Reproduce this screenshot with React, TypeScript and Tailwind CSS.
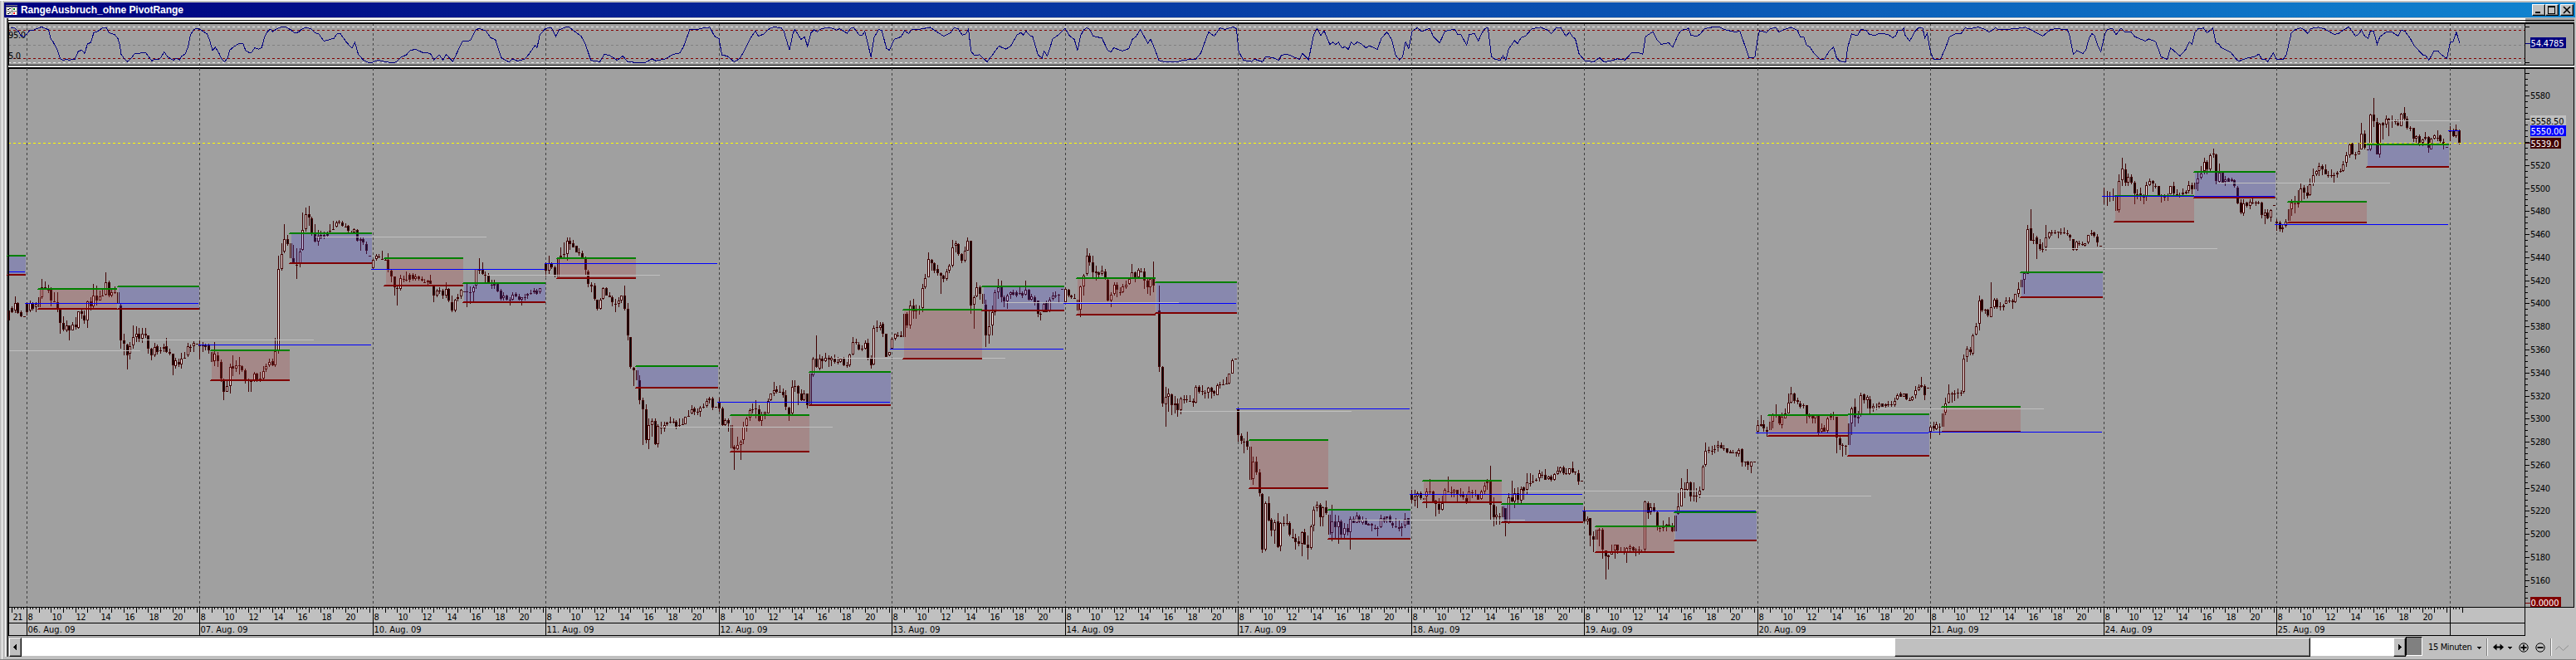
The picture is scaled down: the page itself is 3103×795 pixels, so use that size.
import React from "react";

// Chart data is stored in thirds of a pixel. Bars: w = rising, k = falling (high, body top,
// body bottom, low), d = doji (high, close, low), g = opening bar of a range (top, bottom), - = gap.
type Session = { x: number; y: number; bars: string };

const PITCH = 10.97;

const SESSIONS: Session[] = [
  { x: 32, y: 0, bars: "k1118 1122 1158 1160,k1108 1114 1128 1132,w1072 1096 1122 1132,k1094 1096 1132 1136,k1122 1130 1144 1146,d1143 1143 1144" },
  { x: 97, y: 0, bars: "k1094 1098 1130 1140,w1088 1097 1124 1130,k1094 1098 1118 1122,w1094 1100 1112 1130,g1074 1110,w1008 1040 1074 1080,d1018 1040 1048,d1030 1048 1060,k1040 1048 1088 1108,d1056 1090 1094,k1056 1092 1120 1130,k1118 1120 1168 1206,k1144 1168 1192 1198,w1160 1178 1196 1200,k1176 1178 1196 1232,w1165 1174 1194 1196,k1146 1174 1184 1192,w1126 1126 1186 1188,k1120 1126 1136 1152,k1124 1140 1160 1172,w1088 1090 1160 1186,k1074 1090 1108 1124,w1028 1068 1108 1120,k1034 1068 1088 1104,w1050 1072 1088 1088,d1046 1068 1070,w984 1020 1066 1068,k1016 1022 1068 1074,w1046 1056 1068 1074,d1035 1056 1064,g1056 1100,k1098 1104 1230 1260,k1206 1230 1242 1284,k1244 1246 1284 1337,w1238 1252 1280 1300,w1178 1218 1250 1260,w1180 1206 1220 1236,k1186 1206 1226 1236,w1186 1206 1226 1240,k1186 1208 1212 1222,k1212 1214 1260 1280,k1258 1262 1286 1302,w1240 1254 1286 1290,k1246 1252 1272 1282,d1254 1267 1280,w1242 1255 1262 1274,k1222 1252 1272 1276,k1260 1274 1280 1286,k1278 1280 1322 1358,w1294 1303 1324 1332,k1298 1308 1319 1326,w1276 1297 1319 1334,d1272 1294 1298,w1240 1252 1286 1290,d1246 1254 1272,w1234 1240 1252 1272,d1242 1243 1244" },
  { x: 721, y: 0, bars: "d1230 1248 1300,d1238 1249 1274,k1242 1246 1254 1268,k1244 1248 1268 1280,g1272 1308,w1236 1280 1306 1325,k1274 1284 1306 1328,k1300 1308 1368 1380,k1368 1372 1418 1448,w1374 1396 1418 1418,w1315 1328 1396 1422,k1284 1325 1334 1360,w1304 1320 1334 1346,d1292 1320 1354,k1322 1324 1338 1346,k1334 1340 1372 1386,d1370 1376 1418,d1378 1378 1416,w1346 1350 1378 1380,k1348 1350 1374 1382,k1346 1368 1376 1380,w1324 1342 1368 1372,w1316 1324 1336 1346,w1298 1310 1322 1326,k1298 1306 1320 1324,w1222 1270 1320 1326,w924 972 1266 1280,w880 918 974 980,w810 866 910 916,k850 866 882 888,g880 935,k886 933 950 956,d898 957 1008,w898 910 956 966,w770 832 904 908,w752 774 830 838,k746 774 788 818,k784 790 848 854,k810 848 875 876,w832 852 875 888,k836 850 862 864,k838 850 860 864,k838 844 852 860,d812 836 840,d798 828 832,w798 804 820 824,d795 803 812,k798 804 818 820,d808 820 824,k814 818 836 840,d834 840 846,w826 828 842 846,k828 832 870 874,w858 866 872 906,k860 866 878 886,k874 882 906 918,d924 924 926" },
  { x: 1348, y: 0, bars: "w936 940 970 976,w918 924 938 944,d918 928 934,d906 936 940,d938 939 942,k915 940 976 986,k974 978 1000 1022,k1000 1000 1040 1068,d1030 1042 1106,w994 1006 1046 1050,d998 1010 1020,d982 1012 1018,k988 994 1012 1020,k988 994 1010 1016,w990 1000 1008 1014,k998 1000 1010 1016,k1000 1010 1016 1018,d1008 1020 1024,k1012 1014 1020 1036,k994 1014 1026 1028,k1030 1034 1068 1094,w1044 1050 1068 1074,d1038 1050 1064,k1044 1050 1068 1082,w1020 1044 1068 1078,k1042 1044 1088 1092,k1070 1092 1122 1128,w1082 1084 1122 1130,w1062 1074 1082 1090,w1046 1048 1072 1080,d1053 1054 1056,d1028 1054 1110,d1036 1058 1100,w1032 1038 1058 1090,w974 974 1034 1044,d934 976 992,k950 976 990 994,d982 994 1020,k988 996 1020 1026,d1012 1030 1046,w1012 1026 1032 1044,k1026 1028 1054 1056,k1044 1050 1080 1086,w1056 1068 1078 1086,k1066 1068 1084 1086,d1074 1084 1104,w1056 1066 1084 1086,k1056 1062 1072 1076,k1062 1072 1084 1086,w1074 1076 1084 1106,d1062 1076 1086,w1060 1062 1070 1082,d1048 1060 1066,k1042 1050 1056 1062,k1044 1052 1062 1066,w1042 1042 1058 1064" },
  { x: 1972, y: 600, bars: "k350 353 380 400,w324 353 380 392,k348 353 366 374,k362 366 396 404,g333 400,w294 324 330 332,d276 318 338,w258 270 318 344,k258 270 282 305,k268 280 294 296,k288 290 312 314,d298 312 324,k306 316 330 332,k328 330 376 396,k376 382 428 440,k420 430 434 456,k424 432 482 488,k484 484 516 524,w478 484 516 520,w438 442 482 484,k440 442 468 468,k456 468 472 474,k470 474 494 508,d482 498 530,w476 486 500 512,w468 470 486 496,k432 468 518 524,k496 516 614 632,k618 620 726 734,k728 730 740 796,g740 774,k756 774 846 862,k838 848 880 1010,k862 880 990 1004,w912 936 990 1024,w912 922 936 980,k912 922 1006 1010,w934 940 1006 1018,k924 944 950 970,w924 936 950 960,w924 928 934 940,d906 924 930,d912 924 930,k918 924 942 952,d914 936 942,d914 934 936,w906 906 934 934,d884 904 906,w864 880 896 898,k870 876 888 902,d876 890 900,w868 874 890 906,d858 872 876,w842 850 868 874,w836 840 846 858,k834 840 874 884,d870 871 873" },
  { x: 2599, y: 600, bars: "k838 852 878 888,k870 876 938 940,w912 918 938 940,k914 920 930 962,g936 1020,k1010 1014 1024 1100,w980 1010 1024 1026,w990 998 1010 1062,w924 944 992 1006,w908 912 940 960,w876 882 910 922,d858 880 896,d846 878 912,k866 880 922 924,w888 898 922 940,w888 890 898 916,w840 850 894 896,w822 824 848 850,w780 810 824 832,k796 808 816 822,d792 816 818,k804 816 828 838,k812 828 872 884,k870 874 898 922,w774 798 896 898,d774 796 816,k792 796 822 864,k808 822 848 850,w810 824 848 850,k822 824 864 876,g750 862,w690 698 756 762,k612 698 728 730,w681 696 732 738,k687 696 706 732,w675 694 706 708,k684 694 700 728,w687 694 702 724,k681 696 710 714,d690 709 718,w696 698 708 712,k692 698 720 724,d708 720 730,w678 682 720 726,w620 636 682 686,d624 636 646,k638 645 665 667,d648 660 670,w632 640 660 664,k626 640 696 704,k684 698 720 734,w578 586 718 720,d558 584 602,w564 576 586 596,k564 570 606 620,k606 606 690 692,w672 674 686 688" },
  { x: 3223, y: 600, bars: "w620 624 660 662,w606 608 626 632,d602 612 620,k597 612 618 620,g534 620,k530 534 576 586,w488 504 576 590,k480 504 526 554,w502 520 526 554,d504 518 538,w428 442 514 530,w392 406 440 446,w314 336 402 404,k338 340 352 378,k348 352 378 388,k358 374 388 398,k386 388 398 462,k394 398 410 422,w372 382 410 414,w356 362 378 388,w267 294 360 366,w270 280 290 312,k280 282 318 324,k316 320 344 352,w292 306 344 348,w258 270 306 306,k270 270 504 536,w470 474 502 590,w420 440 472 474,k434 440 462 484,g462 500,k484 502 612 656,w526 580 612 644,w506 530 578 612,w448 458 530 542,w408 438 456 482,k416 434 474 492,k468 474 490 510,w462 468 490 516,w454 458 466 482,k448 456 466 470,k450 456 470 474,d438 460 466,k454 460 470 478,w414 448 466 468,k446 448 484 486,w462 472 484 486,k470 476 492 506,k486 488 536 548,d530 534 560,w494 498 528 530,k488 494 528 530,w474 484 526 530,w458 468 482 488,d454 468 478,d464 466 492,d444 445 446" },
  { x: 3850, y: 600, bars: "w440 446 492 494,k446 448 468 474,k466 468 476 482,d464 477 482,g484 522,w432 436 520 548,w390 396 436 468,w297 324 392 396,k315 324 350 360,k324 350 386 402,k360 382 388 414,k382 386 394 402,w360 380 390 398,k372 382 410 412,k408 412 486 490,w456 466 488 512,w420 430 464 468,k422 430 448 474,d438 456 468,w426 436 456 460,w414 430 438 446,w402 410 426 430,w354 386 408 410,k382 386 404 420,w370 376 402 404,d370 382 386,k370 382 414 446,k408 416 438 462,w402 410 440 468,k345 406 434 456,-,k432 522 726 746,k724 726 860 870,w798 836 862 944,w804 822 836 890,k824 826 864 900,w832 858 866 896,k842 860 884 906,w836 840 884 898,d830 844 860,d830 844 856,d828 849 854,k842 850 854 870,w792 800 856 858,k794 798 816 822,d792 814 828,d810 820 840,w800 802 820 840,k798 802 816 840,k810 814 824 832,w788 792 828 830,d780 790 806,d771 790 794,d762 786 790,w750 752 788 790,w696 702 750 752,d696 697 699" },
  { x: 4474, y: 900, bars: "k576 580 674 698,k666 676 694 705,d684 696 740,k660 694 716 728,g714 834,w752 768 832 854,k750 768 808 816,k796 808 884 896,k884 886 1088 1100,w914 920 1086 1092,k896 920 982 984,k972 980 1018 1038,w978 988 1018 1066,k954 984 1078 1082,w988 992 1076 1092,d966 990 1004,d957 990 1000,k984 992 1034 1040,d1012 1042 1048,k1030 1044 1060 1086,k1038 1056 1066 1076,w1022 1024 1066 1112,k1012 1024 1068 1070,k1036 1068 1082 1124,w998 1002 1082 1086,w932 942 1000 1020,w912 924 938 950,k918 924 970 1004,w930 934 970 1004,k909 934 956 960,g960 1032,w924 986 1028 1056,k960 986 1006 1052,w964 984 1006 1066,k978 984 1034 1052,w990 1010 1034 1052,k994 1010 1024 1036,w966 976 1024 1086,k966 976 990 992,w951 964 990 992,k960 966 984 990,w966 980 990 998,k972 980 998 998,k992 994 998 1000,k990 994 1000 1022,d996 1010 1016,d1004 1010 1038,w960 974 1006 1008,k966 974 984 990,w966 968 974 990,k960 966 988 990,k984 990 1000 1010,d972 1004 1010,k982 1006 1010 1020,w990 1002 1010 1038,w954 976 1000 1010,k972 974 998 998" },
  { x: 5101, y: 900, bars: "k870 888 908 918,w870 896 910 932,w876 884 894 936,k876 884 902 908,g900 908,w864 878 896 938,d831 876 890,k874 876 912 918,k906 910 922 966,k900 922 942 958,w892 918 944 946,w864 870 916 918,d822 876 880,d858 880 898,w868 872 880 898,k870 872 890 920,d864 888 898,k876 888 898 906,k886 900 916 922,w858 876 916 920,d870 880 900,d870 886 896,k886 888 906 908,w870 876 904 906,w844 856 876 888,w832 840 848 870,k783 840 926 978,k898 924 970 1004,w932 960 970 996,d954 966 996,g932 970,k936 938 984 1038,w882 898 992 994,k837 898 914 916,w866 884 914 938,k861 882 908 920,w860 868 910 918,k858 862 874 908,w810 844 872 888,d812 846 858,d816 840 846,d828 834 842,w800 812 830 840,d804 818 828,k795 816 834 836,w820 824 832 836,k816 824 836 842,w810 814 836 838,w788 802 814 816,w788 790 804 812,k783 790 810 816,d794 812 816,w792 794 814 816,k770 792 808 810,d804 806 818,k800 810 842 854,d837 838 840" },
  { x: 5725, y: 900, bars: "k930 946 984 990,w968 976 984 998,k972 974 1036 1074,k1020 1038 1052 1096,g1016 1052,d1010 1016 1074,k1010 1014 1086 1120,k1090 1090 1112 1196,w1104 1108 1114 1158,w1068 1092 1104 1106,w1068 1070 1090 1120,k1068 1070 1090 1102,d1078 1094 1100,d1078 1096 1106,w1078 1082 1096 1136,w1070 1074 1084 1096,k1074 1078 1090 1096,d1080 1088 1112,d1074 1088 1104,d1088 1092 1096,w910 914 1088 1096,k912 918 954 976,w918 934 952 960,k918 934 950 952,k946 952 1000 1018,d1000 1010 1024,w982 1002 1010 1022,d994 998 1020,d970 996 1006,k992 1002 1022 1024,g964 1020,w882 930 958 960,w828 864 930 930,d843 868 900,w795 844 872 874,k840 844 894 914,d843 892 912,d866 892 916,w858 874 890 900,w780 786 870 874,w699 730 782 788,d714 728 740,d711 730 744,d708 724 740,w693 708 718 732,k699 708 720 722,d708 722 730,k720 722 736 740,k728 732 738 740,d726 736 740,d732 736 752,w720 726 742 752,k722 724 772 788,d768 770 788,k766 770 780 800,w768 770 786 810,d768 769 771" },
  { x: 6352, y: 1200, bars: "w318 338 362 364,w300 334 340 342,k318 334 350 360,k344 354 360 380,g324 354,w294 300 324 348,d261 300 310,k300 302 332 338,w292 308 338 348,w276 296 312 314,w222 256 294 296,w198 222 256 258,k220 222 250 258,k237 248 254 262,k249 258 270 276,d258 264 276,k264 266 304 332,d294 304 314,k300 304 314 332,w300 302 314 332,k300 302 364 380,w332 348 362 364,k336 346 360 362,w308 312 358 366,w294 304 310 320,d288 302 318,k306 306 382 438,k378 386 408 428,d402 410 452,d408 412 444,g332 410,w272 276 332 372,k240 270 310 342,k286 308 312 332,w219 228 302 306,k222 226 248 258,w228 236 246 276,k231 244 276 294,w258 268 276 290,d258 276 284,w252 258 272 276,k258 260 270 272,k258 262 268 274,d249 262 270,d249 262 270,w237 250 266 270,w222 228 244 248,k216 222 234 236,w222 224 234 236,k222 224 244 246,d237 246 250,w231 236 248 250,w195 212 230 242,w189 198 212 214,w162 192 200 202,k190 196 230 248,d201 202 204" },
  { x: 6976, y: 300, bars: "w1236 1242 1262 1286,k1224 1240 1250 1258,w1224 1234 1252 1256,d1230 1242 1272,g1194 1244,w1137 1158 1192 1202,w1089 1122 1156 1158,d1116 1124 1156,d1110 1124 1150,d1104 1120 1142,d1110 1120 1132,w981 996 1118 1122,w951 960 992 1010,k954 964 974 984,w906 912 980 984,w867 880 910 914,w768 786 872 896,k782 784 822 828,d816 820 836,k818 820 842 848,w720 810 846 848,w778 784 810 818,k778 784 810 818,d794 808 822,k800 804 808 824,w774 786 800 800,d774 786 796,k782 786 794 818,w762 764 794 796,w720 744 762 776,g711 740,w684 688 712 762,w513 528 692 692,k456 526 570 572,d543 568 582,k552 558 584 636,k566 584 600 606,d578 600 614,w513 560 596 606,w537 542 560 564,d531 540 554,d531 540 548,d538 538 562,d525 540 550,d522 540 548,d531 544 554,k548 550 560 570,k564 566 604 606,w570 574 604 606,d570 580 590,d573 582 588,w579 580 588 592,w549 550 576 584,d531 544 552,k537 542 554 558,k548 556 576 592,d588 589 591" },
  { x: 7603, y: 300, bars: "d378 410 440,d390 410 446,d393 410 430,d381 410 428,g412 462,w330 354 460 470,w270 310 352 372,k291 312 360 372,w327 340 360 374,k330 340 360 368,k354 360 400 440,d384 402 420,k378 400 408 428,k402 408 416 440,w357 370 408 428,w345 354 370 372,k351 354 364 394,d363 374 382,k372 374 406 412,d402 408 434,d404 412 428,d400 410 428,w372 374 404 404,k357 374 400 410,d384 402 406,d396 406 414,k381 398 404 412,w388 394 398 402,w354 370 390 400,k360 370 386 402,g362 386,w321 346 364 390,w300 328 344 350,w270 286 320 330,k279 286 314 330,w255 262 314 320,d237 256 272,k255 258 356 366,w291 324 358 364,k320 324 360 362,w337 348 358 374,k342 346 358 358,w342 348 356 358,k350 352 374 380,k372 378 436 440,k420 434 470 474,w422 436 472 480,k430 434 444 452,w420 430 444 458,d414 434 440,d428 434 444,d426 434 440,k430 434 478 490,w456 468 480 512,k456 468 490 492,w456 460 488 502,d441 442 444" },
  { x: 8227, y: 0, bars: "w792 802 808 836,k800 804 830 838,w812 822 830 842,w792 802 818 824,g756 800,w720 732 756 782,d708 736 772,k687 732 738 750,w663 682 732 734,k669 680 698 720,k674 698 710 718,w645 666 706 708,w609 634 664 674,w617 620 632 638,w588 602 618 638,k596 600 614 634,k596 614 632 632,d618 634 642,d612 634 642,d624 634 660,w618 626 632 644,d609 620 624,w582 594 618 622,w549 562 590 604,w518 522 562 570,k516 520 558 560,d549 560 578,w516 546 558 560,w444 484 540 542,k472 484 536 542,d540 541 542,w412 416 540 546,k354 414 440 460,k426 442 558 560,w444 448 560 570,k442 446 454 504,w418 430 452 462,k426 430 434 494,d418 436 462,d432 440 452,k434 444 454 458,w408 412 456 458,k387 410 430 436,k420 430 464 468,d458 464 474,k462 464 502 514,w490 494 502 516,k486 494 522 530,w502 504 516 530,w478 496 502 508,k492 496 536 552,w498 502 540 542,w486 490 502 506,d472 498 510,k486 490 510 518,k502 514 518 540,d531 532 534" },
  { x: 8854, y: 0, bars: "d456 474 510,k466 472 494 496,w450 470 494 498,k468 472 518 524" },
];

const DAYS: [number, string][] = [
  [97, "06. Aug. 09"], [721, "07. Aug. 09"], [1348, "10. Aug. 09"], [1972, "11. Aug. 09"], [2599, "12. Aug. 09"],
  [3223, "13. Aug. 09"], [3850, "14. Aug. 09"], [4474, "17. Aug. 09"], [5101, "18. Aug. 09"], [5725, "19. Aug. 09"],
  [6352, "20. Aug. 09"], [6976, "21. Aug. 09"], [7603, "24. Aug. 09"], [8227, "25. Aug. 09"], [8854, ""],
];

// morning / afternoon ranges: kind, left, right, upper line, lower line
const RANGES: ["r" | "b", number, number, number, number][] = [
  ["b", 26, 93, 921, 990], ["r", 136, 423, 1041, 1113], ["b", 424, 720, 1032, 1113], ["r", 760, 1047, 1263, 1371],
  ["b", 1046, 1344, 840, 948], ["r", 1388, 1674, 930, 1029], ["b", 1672, 1971, 1020, 1089], ["r", 2011, 2298, 930, 1002],
  ["b", 2296, 2595, 1320, 1398], ["r", 2638, 2925, 1497, 1629], ["b", 2923, 3219, 1341, 1461], ["r", 3262, 3549, 1116, 1293],
  ["b", 3548, 3846, 1032, 1119], ["r", 3889, 4176, 1002, 1134], ["b", 4174, 4470, 1017, 1128], ["r", 4513, 4800, 1587, 1761],
  ["b", 4798, 5097, 1839, 1944], ["r", 5140, 5427, 1734, 1812], ["b", 5425, 5721, 1818, 1884], ["r", 5764, 6051, 1899, 1992],
  ["b", 6049, 6348, 1848, 1950], ["r", 6388, 6678, 1497, 1572], ["b", 6676, 6972, 1494, 1644], ["r", 7015, 7302, 1467, 1557],
  ["b", 7300, 7599, 981, 1071], ["r", 7639, 7929, 705, 798], ["b", 7927, 8223, 618, 711], ["r", 8265, 8553, 726, 801],
  ["b", 8551, 8850, 519, 600],
];

const OPENS: [number, number, number][] = [
  [33, 90, 981], [90, 718, 1095], [718, 1341, 1245], [1341, 1969, 972], [1968, 2592, 951], [2592, 3216, 1452],
  [3216, 3843, 1260], [3843, 4467, 1095], [4467, 5094, 1476], [5094, 5718, 1785], [5718, 6345, 1845], [6345, 6969, 1563],
  [6969, 7596, 1560], [7596, 8220, 708], [8220, 8847, 810], [8847, 8889, 471],
];

const MIDS: [number, number, number][] = [
  [33, 507, 1266], [515, 1134, 1227], [1140, 1758, 855], [1758, 2385, 993], [2385, 3009, 1542], [3009, 3633, 1293],
  [3633, 4260, 1092], [4260, 4884, 1485], [4884, 5511, 1878], [5515, 6140, 1773], [6140, 6762, 1791], [6762, 7386, 1476],
  [7390, 8013, 897], [8013, 8637, 660], [8630, 8889, 435],
];

const OSC: { x: number; sx: number; y: number; pts: string }[] = [
  { x: 0, sx: 1 / 3, y: 0, pts: "38,100 52,100 58,107 66,112 75,128 85,132 97,122 107,108 115,110 125,106 140,100 150,97 158,100 175,107 183,140 192,152 207,180 217,212 228,217 240,214 250,217 262,213 270,213 283,184 295,181 305,192 316,158 328,153 338,118 350,114 370,100 384,100 393,118 413,124 425,138 432,160 437,195 450,214 460,222 475,208 487,192 500,193 512,190 526,190 548,220 557,213 568,215 578,211 593,187 605,205 625,217 638,210 648,216 655,203 668,195 678,172 688,125 700,106 712,102 725,107 748,122 757,145 767,181 778,170 790,190 800,212 811,223 822,208 830,180 842,170 862,157 878,158 887,182 900,190 908,190 920,172 935,177 945,172 955,135 965,115 977,104 985,114 998,104 1018,97 1034,98 1050,107 1066,119 1080,115 1090,105 1100,100 1122,102 1140,119 1150,120 1170,148 1206,138 1218,121 1230,122 1250,150 1271,174 1282,152 1294,195 1312,216 1330,225 1342,226 1365,217 1385,221 1410,226 1430,224 1448,206 1468,198 1480,183 1500,177 1520,186 1530,191" },
  { x: 515, sx: 730 / 1568, y: 20, pts: "0,130 8,135 16,155 30,138 40,157 48,136 65,162 90,88 110,86 125,46 134,43 150,50 163,76 175,82 190,148 210,164 220,152 233,160 252,152 262,135 278,103 283,112 290,65 305,42 320,40 331,71 340,47 358,37 366,38 385,58 397,70 408,98 422,157 445,163 457,136 470,139 490,157 505,142 517,162 540,166 563,166 580,152 590,159 615,152 635,136 652,131 662,108 678,46 700,45 715,40 730,38 742,70 754,80 761,138 775,142 793,163 808,150 820,120 835,77 848,52 856,70 870,62 885,42 897,37 915,41 921,50 936,120 945,60 950,46 966,82 975,73 983,107 992,58 1000,47 1008,55 1015,45 1035,39 1048,42 1058,48 1066,43 1085,60 1095,41 1103,41 1117,67 1125,66 1131,52 1147,145 1155,75 1167,46 1175,49 1187,115 1195,121 1207,82 1225,72 1234,50 1244,61 1252,47 1270,46 1300,38 1316,53 1335,70 1353,58 1362,40 1372,43 1383,66 1393,62 1399,45 1406,125 1415,140 1428,137 1447,163 1460,140 1478,106 1495,117 1508,107 1525,65 1535,57 1541,66 1548,52" },
  { x: 1240, sx: 730 / 1568, y: 20, pts: "0,67 8,72 22,138 32,150 38,124 46,142 60,80 76,64 92,42 103,68 116,82 124,122 132,68 140,47 148,40 155,45 165,70 187,77 202,120 210,128 218,112 240,124 257,115 266,82 275,72 287,46 306,97 313,80 322,110 335,158 350,163 382,164 395,157 430,153 443,132 463,55 478,70 493,40 505,46 527,37 535,43 541,125 553,157 575,162 582,153 603,163 610,145 628,147 645,157 652,138 668,136 698,154 706,133 722,155 735,65 744,43 753,68 762,51 777,100 785,92 792,100 799,92 809,113 816,108 825,118 832,92 840,101 848,91 858,98 871,113 878,104 900,118 910,78 925,55 937,83 947,138 957,156 965,145 973,90 981,116 990,52 1003,40 1015,53 1035,42 1045,72 1061,94 1075,52 1100,45 1108,64 1116,64 1131,103 1138,64 1152,61 1161,88 1170,60 1178,43 1186,40 1195,143 1205,154 1218,157 1225,140 1232,157 1240,115 1255,86 1263,97 1272,75 1283,70 1300,43 1322,38 1340,48 1350,61 1362,41 1374,40 1388,70 1397,55 1405,72 1412,80 1422,135 1437,159 1460,163 1475,147 1485,162 1500,161 1520,152 1540,156 1552,139" },
  { x: 1965, sx: 740 / 1568, y: 20, pts: "0,131 20,131 29,135 36,72 48,60 55,55 66,84 76,100 95,94 105,110 120,63 128,48 140,46 145,40 152,66 167,71 175,63 187,43 210,37 225,38 240,47 265,55 277,52 289,102 300,148 315,146 322,80 327,50 345,57 355,42 370,40 376,55 388,47 408,38 424,50 431,72 440,74 447,103 456,110 466,132 480,152 492,155 505,123 516,110 524,150 533,161 547,163 552,110 562,62 577,68 586,45 600,50 607,64 622,67 632,61 655,63 666,76 674,70 680,50 690,48 695,42 698,65 710,88 725,50 733,40 743,40 749,77 755,60 763,125 770,152 788,155 800,118 812,72 828,61 842,60 852,40 862,44 885,37 900,44 913,55 930,40 935,46 975,44 1005,38 1020,47 1050,70 1070,46 1085,43 1113,47 1119,72 1128,136 1137,122 1152,133 1160,120 1168,78 1175,61 1182,68 1190,103 1198,127 1208,65 1214,46 1228,43 1237,65 1250,41 1260,55 1275,55 1285,72 1312,88 1320,80 1338,90 1352,145 1368,154 1376,112 1400,142 1415,118 1424,90 1431,100 1438,58 1447,43 1460,41 1469,58 1484,41 1492,95 1500,99 1505,111 1530,129 1543,152 1550,161" },
  { x: 2700, sx: 1 / 3, y: 0, pts: "0,216 15,211 50,203 62,194 73,213 85,213 94,222 115,191 127,214 150,215 162,196 180,118 195,106 213,100 228,109 239,121 250,103 277,98 300,104 335,124 350,121 367,108 388,97 397,109 412,130 425,121 433,107 445,130 457,138 465,113 477,113 490,159 500,132 523,115 545,116 565,130 577,109 590,112 610,139 622,162 655,198 664,199 677,216 695,184 710,184 720,196 742,211 754,150 764,151 776,116 788,155" },
];

const oscPoints = OSC.flatMap((s) =>
  s.pts.split(" ").map((p) => {
    const [x, y] = p.split(",").map(Number);
    return `${(s.x + x * s.sx + 0.2).toFixed(1)},${(s.y + y / 3 + 0.2).toFixed(1)}`;
  }),
).join(" ");

const px = (u: number) => Math.floor(u / 3);
const TEXT = "font-['DejaVu_Sans_Condensed','DejaVu_Sans',sans-serif] text-[11px]";

function Candle({ x, y, bar }: { x: number; y: number; bar: string }) {
  const kind = bar[0];
  if (kind === "-") return null;
  const v = bar.slice(1).split(" ").map((n) => Math.round((Number(n) + y - 1) / 3));
  if (kind === "g") {
    return (
      <>
        <rect x={x - 1} y={v[0]} width={1} height={v[1] - v[0]} fill="#400000" />
        <rect x={x + 1} y={v[0]} width={1} height={v[1] - v[0]} fill="#400000" />
      </>
    );
  }
  if (kind === "d") {
    return (
      <>
        <rect x={x} y={v[0]} width={1} height={Math.max(1, v[2] - v[0])} fill="#400000" />
        <rect x={x - 1} y={v[1]} width={3} height={1} fill="#400000" />
      </>
    );
  }
  const h = Math.max(2, v[2] - v[1]);
  return (
    <>
      <rect x={x} y={v[0]} width={1} height={Math.max(1, v[3] - v[0])} fill="#400000" />
      <rect x={x - 1} y={v[1]} width={3} height={h} fill="#400000" />
      {h > 2 && <rect x={x} y={v[1] + 1} width={1} height={h - 2} fill={kind === "w" ? "#ffffff" : "#000000"} />}
    </>
  );
}

function DayLines({ y1, y2 }: { y1: number; y2: number }) {
  return (
    <>
      {DAYS.map(([u]) => (
        <line key={u} x1={px(u) + 0.5} x2={px(u) + 0.5} y1={y1} y2={y2} stroke="#404040" strokeDasharray="3 3" />
      ))}
    </>
  );
}

function Oscillator() {
  const levels: [number, string][] = [[32, "#e8e8e8"], [36, "#800000"], [54, "#808080"], [70, "#800000"], [75, "#e8e8e8"]];
  return (
    <svg className="block" width={3091} height={50} viewBox="10 29 3091 50" shapeRendering="crispEdges">
      <rect x={10} y={29} width={3091} height={50} fill="#a0a0a0" />
      <DayLines y1={28} y2={78} />
      {levels.map(([y, c]) => (
        <line key={y} x1={10} x2={3041} y1={y + 0.5} y2={y + 0.5} stroke={c} strokeDasharray="3 3" />
      ))}
      <text x={10} y={46} fill="#000" className={TEXT} textLength={21}>95.0</text>
      <text x={10} y={71} fill="#000" className={TEXT} textLength={15}>5.0</text>
      <polyline points={oscPoints} fill="none" stroke="#000080" strokeWidth={1} />
      <path d="M10.5 29V78.5H3100.5V29M3041.5 29V78M3042 32.5h5M3042 75.5h5" fill="none" stroke="#000" />
      <rect x={3042} y={52} width={6} height={1} fill="#000080" />
      <rect x={3048} y={45} width={43} height={13} fill="#000080" />
      <text x={3048.5} y={56} fill="#fff" className={TEXT} textLength={40}>54.4785</text>
    </svg>
  );
}

const priceY = (p: number) => Math.floor(199.3 + (5520 - p) * 1.3889);
const PRICES = Array.from({ length: 92 }, (_, i) => 5600 - i * 5);

function PriceTag({ y, w, h = 13, bg, fg, label }: { y: number; w: number; h?: number; bg: string; fg: string; label: string }) {
  return (
    <>
      <rect x={3048} y={y} width={w} height={h} fill={bg} />
      <text x={3048.5} y={y + 11} fill={fg} className={TEXT} textLength={w - 3}>{label}</text>
    </>
  );
}

function PriceChart() {
  return (
    <svg className="block overflow-visible" width={3091} height={648} viewBox="10 83 3091 648" shapeRendering="crispEdges">
      <rect x={10} y={83} width={3091} height={648} fill="#a0a0a0" />
      <DayLines y1={82} y2={731} />
      {SESSIONS.map((s) =>
        s.bars.split(",").map((b, i) => <Candle key={`${s.x}-${i}`} x={px(s.x + i * PITCH + 0.5)} y={s.y} bar={b} />),
      )}
      {RANGES.map(([k, a, b, g, r]) => (
        <rect
          key={a}
          x={px(a + 7)}
          y={px(g) + 1}
          width={px(b) - px(a + 7)}
          height={px(r) - px(g) - 1}
          fill={k === "r" ? "rgba(176,64,64,0.25)" : "rgba(64,64,216,0.25)"}
        />
      ))}
      {MIDS.map(([a, b, y]) => (
        <rect key={a} x={px(a)} y={px(y)} width={px(b) - px(a)} height={1} fill="#c0c0c0" />
      ))}
      {RANGES.map(([, a, b, g, r]) => (
        <g key={a}>
          <rect x={px(a)} y={px(g) + 1} width={1} height={1} fill="#008000" />
          <rect x={px(a) + 1} y={px(g)} width={px(b) - px(a) - 1} height={2} fill="#008000" />
          <rect x={px(a)} y={px(r) + 1} width={1} height={1} fill="#800000" />
          <rect x={px(a) + 1} y={px(r)} width={px(b) - px(a) - 1} height={2} fill="#800000" />
        </g>
      ))}
      {OPENS.map(([a, b, y]) => (
        <rect key={a} x={px(a)} y={px(y)} width={px(b) - px(a)} height={1} fill="#0000ff" />
      ))}
      <line x1={10} x2={3041} y1={172.5} y2={172.5} stroke="#ffff00" strokeDasharray="3 3" />
      <path d="M10.5 83V731M3041.5 83V731M3100.5 83V731" fill="none" stroke="#000" />
      {PRICES.map((p) => (
        <rect key={p} x={3042} y={priceY(p)} width={p % 20 === 0 ? 5 : 3} height={1} fill="#000" />
      ))}
      {PRICES.filter((p) => p % 20 === 0 && p <= 5580 && p >= 5160 && p !== 5560 && p !== 5540).map((p) => (
        <text key={p} x={3048} y={priceY(p) + 4} fill="#000" className={TEXT} textLength={24}>{p}</text>
      ))}
      <rect x={3042} y={145} width={6} height={1} fill="#c0c0c0" />
      <PriceTag y={139} w={43} bg="#c0c0c0" fg="#000" label="5558.50" />
      <PriceTag y={151} w={43} bg="#0000ff" fg="#fff" label="5550.00" />
      <rect x={3042} y={172} width={6} height={1} fill="#400000" />
      <PriceTag y={166} w={37} bg="#400000" fg="#fff" label="5539.0" />
      <rect x={3042} y={726} width={6} height={1} fill="#800000" />
      <PriceTag y={719} w={37} h={12} bg="#800000" fg="#fff" label="0.0000" />
    </svg>
  );
}

function TimeAxis() {
  return (
    <svg className="block" width={3093} height={35} viewBox="10 731 3093 35" shapeRendering="crispEdges">
      <rect x={10} y={731} width={3093} height={35} fill="#c0c0c0" />
      <path d="M10 731.5H3101M10 750.5H3041M10 765.5H3042M10.5 731V766M3041.5 731V766" fill="none" stroke="#000" />
      {[0, 1, 2, 3, 4].map((i) => (
        <rect key={i} x={px(43 + i * PITCH)} y={732} width={1} height={i ? 2 : 6} fill="#000" />
      ))}
      <text x={15.5} y={747} fill="#000" className={TEXT} textLength={12}>21</text>
      {DAYS.map(([u, label], d) => (
        <g key={u}>
          {Array.from({ length: d === DAYS.length - 1 ? 5 : 57 }, (_, i) => (
            <rect key={i} x={px(u + i * PITCH + 0.5)} y={732} width={1} height={i % 4 === 0 ? 6 : 2} fill="#000" />
          ))}
          <rect x={px(u)} y={731} width={1} height={35} fill="#000" />
          {label && (
            <>
              <text x={px(u) + 1.5} y={747} fill="#000" className={TEXT}>8</text>
              {[10, 12, 14, 16, 18, 20].map((h) => (
                <text key={h} x={px(u + (h - 8) * 4 * PITCH) + 1.5} y={747} fill="#000" className={TEXT} textLength={12}>{h}</text>
              ))}
              <text x={px(u) + 1.5} y={762} fill="#000" className={TEXT} textLength={57}>{label}</text>
            </>
          )}
        </g>
      ))}
    </svg>
  );
}

function CaptionButton({ children, className = "" }: { children: React.ReactNode; className?: string }) {
  return (
    <button className={`h-[14px] w-4 border border-t-white border-l-white border-r-black border-b-black bg-[#c0c0c0] shadow-[inset_-1px_-1px_0_#808080] ${className}`}>
      <svg className="block" width={14} height={12} shapeRendering="crispEdges" fill="none" stroke="#000">{children}</svg>
    </button>
  );
}

function TitleBar() {
  return (
    <header className="flex h-[18px] items-start bg-[linear-gradient(to_right,#000080,#1084d0)] pl-[2px]">
      <svg className="mt-[3px] block" width={14} height={12} shapeRendering="crispEdges">
        <rect width={14} height={1} fill="#808080" />
        <rect y={2} width={14} height={10} fill="#fff" />
        <path d="M0 2.5h14M7.5 3v9M0 7.5h14M.5 3v9M13.5 3v9" stroke="#808080" />
        <path d="M2 5.5h2M4 4.5h2M2 10.5h2M4 9.5h2" stroke="#000" />
        <rect x={9} y={4} width={2} height={2} fill="#008000" />
        <rect x={9} y={9} width={2} height={2} fill="#f00" />
      </svg>
      <h1 className="ml-[4px] grow font-['Liberation_Sans',Arial,sans-serif] text-[12px] leading-[18px] font-bold tracking-[-0.05px] text-white">
        RangeAusbruch_ohne PivotRange
      </h1>
      <div className="mt-[2px] mr-[2px] flex">
        <CaptionButton><path d="M3 9h6" strokeWidth={2} /></CaptionButton>
        <CaptionButton><path d="M2.5 2v8.5h8V2M2 2h9" /><path d="M2 2h9" strokeWidth={2} /></CaptionButton>
        <CaptionButton className="ml-[2px]"><path d="M3 2l8 8M11 2l-8 8" strokeWidth={1.6} shapeRendering="auto" /></CaptionButton>
      </div>
    </header>
  );
}

function ScrollButton({ d }: { d: string }) {
  return (
    <button className="h-[23px] w-[15px] shrink-0 border border-t-white border-l-white border-r-black border-b-black bg-[#c0c0c0] shadow-[inset_-1px_-1px_0_#808080]">
      <svg className="block" width={13} height={21} shapeRendering="crispEdges"><path d={d} /></svg>
    </button>
  );
}

function BottomBar() {
  return (
    <footer className="flex h-[28px] items-start bg-[#c0c0c0] pl-px">
      <div className="mt-px flex h-[24px] w-[2887px] border-t border-[#808080] bg-white">
        <ScrollButton d="M4 10.5l4-4v8z" />
        <div className="w-[2256px] border-b border-[#c0c0c0]" />
        <div className="w-[501px] border border-t-white border-l-white border-r-black border-b-black bg-[#c0c0c0] shadow-[inset_-1px_-1px_0_#808080]" />
        <div className="grow border-b border-[#c0c0c0]" />
        <ScrollButton d="M9 10.5l-4-4v8z" />
      </div>
      <div className="mt-px h-[23px] w-[20px] border border-t-black border-l-black border-r-white border-b-white bg-[#808080]" />
      <span className="mt-[5px] ml-[7px] w-[56px] font-['DejaVu_Sans_Condensed','DejaVu_Sans',sans-serif] text-[11px] leading-[18px] tracking-[-0.35px] whitespace-nowrap text-black">
        15 Minuten
      </span>
      <svg className="block" width={120} height={28} viewBox="2981 766 120 28">
        <g shapeRendering="crispEdges">
          <path d="M2984 779h5l-2.5 3z" />
          <path d="M3021 779h5l-2.5 3z" />
          <rect x={2995} y={769} width={1} height={21} fill="#808080" />
          <rect x={2996} y={769} width={1} height={21} fill="#fff" />
          <rect x={3072} y={769} width={1} height={21} fill="#808080" />
          <rect x={3073} y={769} width={1} height={21} fill="#fff" />
        </g>
        <path d="M3003 779.5l4.5-4v3h4v-3l4.5 4-4.500 4v-3h-4v3z" />
        <g fill="none" stroke="#000">
          <circle cx={3040} cy={780} r={5.2} />
          <path d="M3036.5 780h7M3040 776.5v7" strokeWidth={1.8} />
          <circle cx={3060} cy={780} r={5.2} />
          <path d="M3056.5 780h7" strokeWidth={1.8} />
          <path d="M3078.5 782.5l4-4 5 5 6.5-6" stroke="#909090" />
        </g>
      </svg>
    </footer>
  );
}

export default function App() {
  return (
    <main className="h-[795px] w-[3103px] overflow-hidden border-t border-b border-t-white border-b-[#808080] bg-[#c0c0c0]">
      <div className="flex h-[793px]">
        <div className="w-[2px] shrink-0" />
        <div className="w-px shrink-0 bg-white" />
        <div className="flex w-[3100px] flex-col pt-[2px]">
          <div className="mr-px ml-[2px]"><TitleBar /></div>
          <div className="flex grow">
            <div className="mt-px flex h-[769px] w-[7px] shrink-0">
              <div className="ml-[3px] w-px bg-white" />
              <div className="ml-px w-px bg-[#808080]" />
              <div className="w-px bg-black" />
            </div>
            <div className="w-[3093px] pt-px">
              <div className="flex h-[7px]">
                <div className="h-[7px] w-[3032px] border-b-2 border-black bg-[linear-gradient(#fff_0_2px,#000_2px_3px,#fff_3px)]" />
                <div className="h-[7px] w-[59px] border-b-2 border-black bg-[linear-gradient(#a0a0a0_0_2px,#000_2px_3px,#a0a0a0_3px)]" />
              </div>
              <Oscillator />
              <div className="h-[4px] w-[3091px] border-b-2 border-black bg-white" />
              <PriceChart />
              <TimeAxis />
              <BottomBar />
            </div>
          </div>
        </div>
      </div>
    </main>
  );
}
